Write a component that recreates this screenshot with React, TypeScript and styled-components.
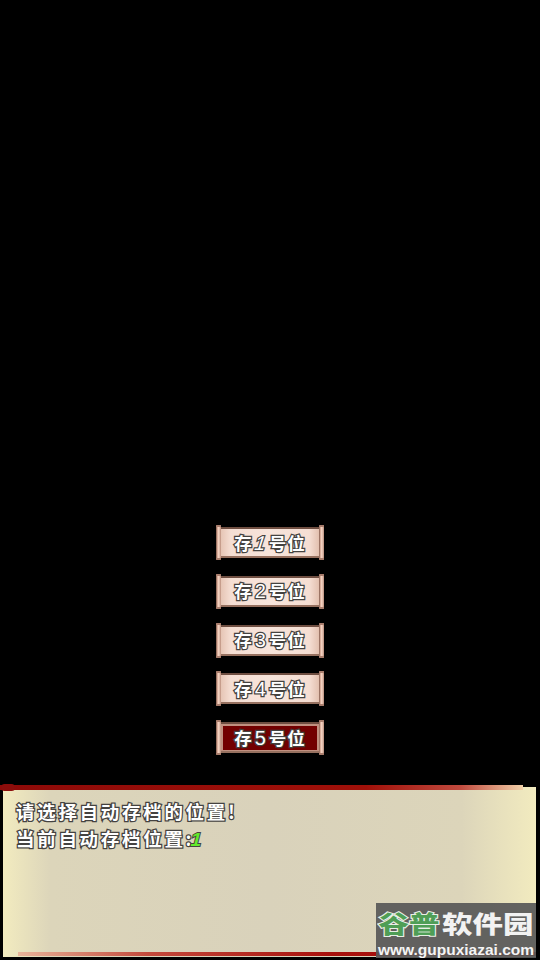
import React from "react";
import styled, { createGlobalStyle } from "styled-components";

const Global = createGlobalStyle`
  html, body { margin: 0; padding: 0; background: #000; }
  body { font-family: "Noto Sans CJK SC", "Liberation Sans", sans-serif; }
`;

const Screen = styled.div`
  width: 540px;
  height: 960px;
  background: #000;
  position: relative;
  overflow: hidden;
  display: flex;
  flex-direction: column;
  justify-content: flex-end;
`;

// save slot buttons
const SlotList = styled.div`
  display: flex;
  flex-direction: column;
  align-items: center;
  gap: 13.75px;
  margin-bottom: 32px;
  padding-right: 1px;
`;

const Slot = styled.div`
  width: 108px;
  height: 35px;
  display: flex;
  align-items: center;
`;

const Rod = styled.div`
  width: 5px;
  height: 35px;
  flex-shrink: 0;
  border-radius: 1px;
  background: linear-gradient(90deg, #7d5648 0%, #e8bca8 35%, #f6d6c6 55%, #b98d7b 100%);
  box-shadow: inset 0 3px 0 -1px #a87d6c, inset 0 -3px 0 -1px #a87d6c;
`;

const Paper = styled.div<{ $active?: boolean }>`
  flex: 1;
  height: 31px;
  box-sizing: border-box;
  display: flex;
  align-items: center;
  justify-content: center;
  border-top: 2px solid #6f4e41;
  border-bottom: 2px solid #96705f;
  background: ${(p) =>
    p.$active
      ? "#720000"
      : "linear-gradient(90deg, #e6c5b5 0%, #f5ded3 10%, #f7e4db 50%, #f5ded3 90%, #e3c0af 100%)"};
  box-shadow: ${(p) => (p.$active ? "inset 2px 2px 0 #c09080, inset -2px -1px 0 #c09080" : "none")};
`;

const SlotLabel = styled.span`
  display: flex;
  gap: 1px;
  font-size: 17.5px;
  font-weight: 700;
  line-height: 20px;
  color: #fff;
  -webkit-text-stroke: 2.5px #444240;
  paint-order: stroke fill;
  white-space: nowrap;
`;

const Digit = styled.span<{ $slim?: boolean }>`
  display: inline-block;
  width: 15px;
  text-align: center;
  font-family: "Liberation Sans", sans-serif;
  font-weight: 400;
  font-size: 20px;
  transform: ${(p) => (p.$slim ? "skewX(-18deg)" : "none")};
`;

// dialog at the bottom
const Dialog = styled.div`
  height: 170px;
  margin: 0 4px 3px 3px;
  box-sizing: border-box;
  padding: 11px 13px 0;
  position: relative;
  background: linear-gradient(90deg, #f2ebbf 0%, #dcd5ba 9%, #d9d2bb 50%, #dcd5ba 86%, #f2ebbf 100%);
`;

const TopEdge = styled.div`
  position: absolute;
  left: -3px;
  right: 13px;
  top: -2px;
  height: 5px;
  background: linear-gradient(90deg, #8e0a08 0%, #a01009 70%, #c04a3e 88%, #f0d0a8 100%);
`;

const BottomEdge = styled.div`
  position: absolute;
  left: 15px;
  right: 0;
  bottom: 1px;
  height: 4px;
  background: linear-gradient(90deg, #e8b49a 0%, #c44a3c 25%, #a8100c 60%, #a00e0a 100%);
`;

const Knot = styled.div`
  position: absolute;
  left: -2px;
  top: -3px;
  width: 14px;
  height: 7px;
  border-radius: 4px;
  background: #8c0d0b;
`;

const Line = styled.div`
  font-size: 18.5px;
  font-weight: 700;
  line-height: 27px;
  letter-spacing: 2.7px;
  color: #fff;
  -webkit-text-stroke: 2.5px #444240;
  paint-order: stroke fill;
  white-space: nowrap;
`;

const Current = styled.span`
  display: inline-block;
  color: #62ea2a;
  font-family: "Liberation Sans", sans-serif;
  font-weight: 700;
  font-size: 19px;
  -webkit-text-stroke: 2px #444240;
  transform: skewX(-14deg);
  margin-left: -3px;
`;

// site watermark laid over the corner
const Watermark = styled.div`
  position: absolute;
  right: 4px;
  bottom: 2px;
  width: 160px;
  height: 55px;
  box-sizing: border-box;
  background: rgba(88, 88, 88, 0.93);
  display: flex;
  flex-direction: column;
  align-items: center;
  padding-top: 2px;
`;

const MarkTitle = styled.div`
  display: flex;
  font-size: 24px;
  font-weight: 900;
  line-height: 35px;
  transform: scaleX(1.27);
`;

const MarkGreen = styled.span`
  color: #4f9e56;
  -webkit-text-stroke: 2px #e8efe6;
  paint-order: stroke fill;
`;

const MarkWhite = styled.span`
  color: #f2f2f2;
  margin-left: 2px;
`;

const MarkUrl = styled.div`
  margin-top: 1px;
  font-family: "Liberation Sans", sans-serif;
  font-size: 15.5px;
  font-weight: 700;
  line-height: 17px;
  color: #f4f4f4;
  white-space: nowrap;
`;

const slots = ["1", "2", "3", "4", "5"];

const App: React.FC = () => {
  return (
    <Screen>
      <Global />
      <SlotList>
        {slots.map((n) => (
          <Slot key={n}>
            <Rod />
            <Paper $active={n === "5"}>
              <SlotLabel>
                <span>存</span>
                <Digit $slim={n === "1"}>{n}</Digit>
                <span>号</span>
                <span>位</span>
              </SlotLabel>
            </Paper>
            <Rod />
          </Slot>
        ))}
      </SlotList>
      <Dialog>
        <TopEdge />
        <Knot />
        <BottomEdge />
        <Line>请选择自动存档的位置!</Line>
        <Line>
          当前自动存档位置:<Current>1</Current>
        </Line>
      </Dialog>
      <Watermark>
        <MarkTitle>
          <MarkGreen>谷普</MarkGreen>
          <MarkWhite>软件园</MarkWhite>
        </MarkTitle>
        <MarkUrl>www.gupuxiazai.com</MarkUrl>
      </Watermark>
    </Screen>
  );
};

export default App;
